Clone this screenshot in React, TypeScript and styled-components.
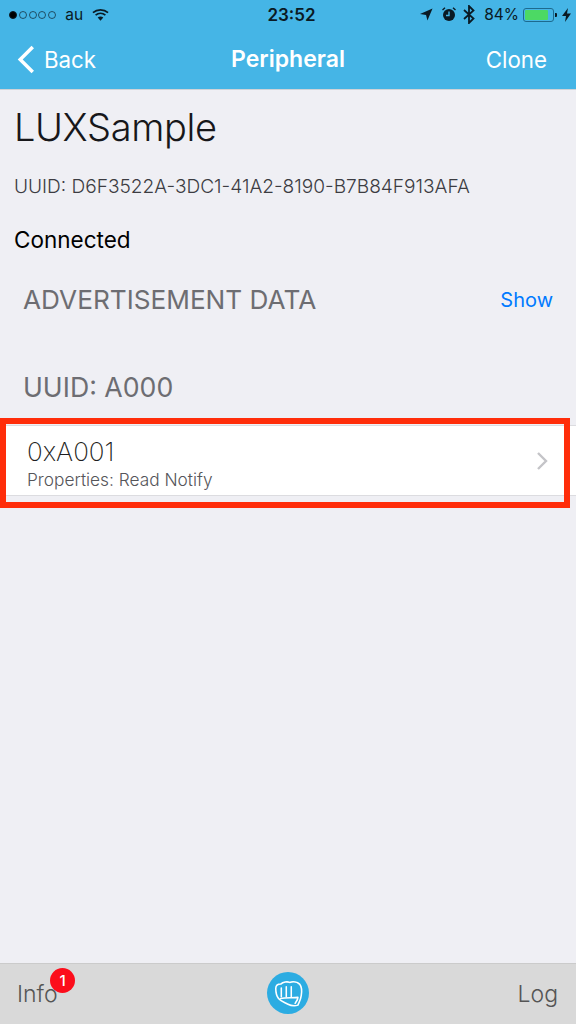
import React from "react";
import styled, { createGlobalStyle } from "styled-components";

const Global = createGlobalStyle`
  html, body { margin: 0; padding: 0; background: #efeff4; }
  * { box-sizing: border-box; }
`;
const Page = styled.div`
  width: 576px; height: 1024px; display: flex; flex-direction: column;
  background: #efeff4; font-family: Inter, "Liberation Sans", sans-serif; overflow: hidden; position: relative;
`;
const Header = styled.header`
  height: 90px; background: #45b5e6; border-bottom: 1px solid #cfd3d8; display: flex; flex-direction: column; flex: none;
`;
const StatusBar = styled.div`
  height: 29px; padding: 0 5px 0 9px; display: flex; align-items: center; position: relative; color: #0a1a24;
  font-size: 15.5px;
`;
const Dots = styled.div`display: flex; gap: 1.8px; align-items: center;`;
const Dot = styled.span<{ $on?: boolean }>`
  width: 8px; height: 8px; border-radius: 50%; border: 1px solid #0a1a24; background: ${p => (p.$on ? "#000" : "transparent")};
  opacity: ${p => (p.$on ? 1 : 0.65)};
`;
const Carrier = styled.span`margin-left: 9px; margin-right: 9px;`;
const Clock = styled.span`
  position: absolute; left: 7px; right: 0; text-align: center; font-weight: 600; font-size: 17px; pointer-events: none;
`;
const StatusRight = styled.div`margin-left: auto; display: flex; align-items: center; gap: 7px;`;
const Battery = styled.div`
  width: 31px; height: 14px; border: 1px solid #1d6a8f; border-radius: 3px; padding: 1px; margin-left: -3px;
  display: flex; position: relative;
  &::after { content: ""; position: absolute; right: -4px; top: 4px; width: 2px; height: 4px; background: #0a1a24; border-radius: 0 1px 1px 0; }
`;
const BatteryFill = styled.div`height: 100%; background: #4cd964; border-radius: 1px;`;
const NavBar = styled.nav`
  flex: 1; display: flex; align-items: center; justify-content: space-between; padding: 0 29px 0 17px; position: relative; color: #fff; font-size: 22.3px;
`;
const BackLink = styled.span`display: flex; align-items: center; gap: 9px;`;
const NavTitle = styled.span`
  position: absolute; left: 0; right: 0; text-align: center; font-weight: 600; font-size: 23px; pointer-events: none;
`;
const NavAction = styled.span``;
const Main = styled.main`flex: 1; display: flex; flex-direction: column;`;
const Title = styled.h1`
  margin: 0; padding: 14px 14px 0; font-size: 38px; line-height: 46px; font-weight: 300; color: #17171a; letter-spacing: -0.4px;
`;
const Uuid = styled.div`
  padding: 26px 14px 0; font-size: 19.08px; line-height: 22px; color: #3c3c42; font-weight: 300;
`;
const Status = styled.div`
  padding: 28px 14px 0; font-size: 22.5px; line-height: 28px; color: #000;
`;
const SectionRow = styled.div`
  padding: 29px 23px 0; display: flex; justify-content: space-between; align-items: center;
`;
const SectionLabel = styled.span`font-size: 26.2px; line-height: 34px; color: #6d6d72; font-weight: 400;`;
const ShowLink = styled.span`font-size: 20px; color: #007aff;`;
const UuidHead = styled.div`
  padding: 53px 23px 0; font-size: 26.7px; line-height: 34px; color: #6d6d72;
`;
const CellWrap = styled.div`
  margin-top: 21px; height: 71px; background: #fff; border-top: 1px solid #dcdce0; border-bottom: 1px solid #dcdce0;
  position: relative; display: flex; align-items: center; justify-content: space-between; padding: 0 28px 0 27px;
`;
const CellText = styled.div`display: flex; flex-direction: column; margin-top: 7px;`;
const CellTitle = styled.span`font-size: 26px; line-height: 32px; font-weight: 200; color: #1d1d20;`;
const CellSub = styled.span`font-size: 17.3px; line-height: 24px; font-weight: 300; color: #55555a;`;
const Highlight = styled.div`
  position: absolute; left: 0; top: -8px; width: 570px; height: 90px; border: 6px solid #ff2d0a; pointer-events: none;
`;
const TabBar = styled.footer`
  height: 61px; flex: none; background: #d9d9d9; border-top: 1px solid #cbcbcb; display: flex; align-items: center; justify-content: space-between;
  padding: 0 18px 0 17px; position: relative; font-size: 23px; font-weight: 300; color: #555;
`;
const TabLabel = styled.span`position: relative; margin-bottom: 1px;`;
const Badge = styled.span`
  position: absolute; left: 33px; top: -12px; width: 25px; height: 25px; border-radius: 50%; background: #fc0d1b; color: #fff;
  font-size: 15px; font-weight: 500; display: flex; align-items: center; justify-content: center;
`;
const FistButton = styled.div`
  position: absolute; left: 267px; top: 8px; width: 42px; height: 42px; border-radius: 50%; background: #2cace2;
  display: flex; align-items: center; justify-content: center;
`;

export default function App() {
  return (
    <Page>
      <Global />
      <Header>
        <StatusBar>
          <Dots><Dot $on /><Dot /><Dot /><Dot /><Dot /></Dots>
          <Carrier>au</Carrier>
          <svg width="17" height="14" viewBox="0 0 18 14"><path d="M1 4.5C5.5 .5 12.5 .5 17 4.5" fill="none" stroke="#0a1a24" strokeWidth="1.8"/><path d="M3.8 7.2C6.8 4.7 11.2 4.7 14.2 7.2" fill="none" stroke="#0a1a24" strokeWidth="1.8"/><path d="M6 9.6 9 13 12 9.6C10.2 8.2 7.8 8.2 6 9.6Z" fill="#0a1a24"/></svg>
          <Clock>23:52</Clock>
          <StatusRight>
            <svg width="13" height="13" viewBox="0 0 14 14"><path d="M13.5 .5 0 6.5 6.5 7.5 8 13.5Z" fill="#0a1a24"/></svg>
            <svg width="14" height="15" viewBox="0 0 14 15" style={{ marginLeft: 2 }}><circle cx="7" cy="8" r="6" fill="#0a1a24"/><path d="M7 4.5V8.5H4" fill="none" stroke="#45b5e6" strokeWidth="1.4"/><path d="M.5 3 3 .8M13.5 3 11 .8" stroke="#0a1a24" strokeWidth="1.4"/></svg>
            <svg width="12" height="19" viewBox="0 0 12 19"><path d="M1 5 10.5 13.5 6 18V1L10.5 5.5 1 14" fill="none" stroke="#0a1a24" strokeWidth="1.8"/></svg>
            <span style={{ marginLeft: 2 }}>84%</span>
            <Battery><BatteryFill style={{ width: "84%" }} /></Battery>
            <svg width="9" height="14" viewBox="0 0 9 14" style={{ marginLeft: 1 }}><path d="M6 0 0 8H4L3 14 9 5.5H5Z" fill="#0a1a24"/></svg>
          </StatusRight>
        </StatusBar>
        <NavBar>
          <BackLink>
            <svg width="18" height="29" viewBox="0 0 18 30"><path d="M16 2 3 15 16 28" fill="none" stroke="#fff" strokeWidth="3.6"/></svg>
            Back
          </BackLink>
          <NavTitle>Peripheral</NavTitle>
          <NavAction>Clone</NavAction>
        </NavBar>
      </Header>
      <Main>
        <Title>LUXSample</Title>
        <Uuid>UUID: D6F3522A-3DC1-41A2-8190-B7B84F913AFA</Uuid>
        <Status>Connected</Status>
        <SectionRow><SectionLabel>ADVERTISEMENT DATA</SectionLabel><ShowLink>Show</ShowLink></SectionRow>
        <UuidHead>UUID: A000</UuidHead>
        <CellWrap>
          <CellText>
            <CellTitle>0xA001</CellTitle>
            <CellSub>Properties: Read Notify</CellSub>
          </CellText>
          <svg width="12" height="20" viewBox="0 0 12 20"><path d="M2 2 10 10 2 18" fill="none" stroke="#c4c4c8" strokeWidth="2.4"/></svg>
          <Highlight />
        </CellWrap>
      </Main>
      <TabBar>
        <TabLabel>Info<Badge>1</Badge></TabLabel>
        <FistButton>
          <svg width="31" height="31" viewBox="0 0 28 28" fill="none" stroke="#fff" strokeLinecap="round" strokeLinejoin="round">
            <path d="M2.5 9.5C2.5 7 4.5 5.5 7 5.5 9 3.5 13 3 15 4 18 3 22 3.5 24 5.5 26 8 26 13 25.5 16 25 20 23.5 22 22.5 24.5 20 25.5 16 25 13 23.5 10 22 7 21 5 18.5 3 16 2.5 13 2.5 9.5Z" strokeWidth="1.4"/>
            <path d="M7.5 9V17M12 8V17M16.5 8V17" strokeWidth="1.4"/>
            <path d="M7 18.5C11 17.5 17 18 22.5 17.5 22.5 19.5 21 21 20 23" strokeWidth="1.4"/>
          </svg>
        </FistButton>
        <TabLabel>Log</TabLabel>
      </TabBar>
    </Page>
  );
}
